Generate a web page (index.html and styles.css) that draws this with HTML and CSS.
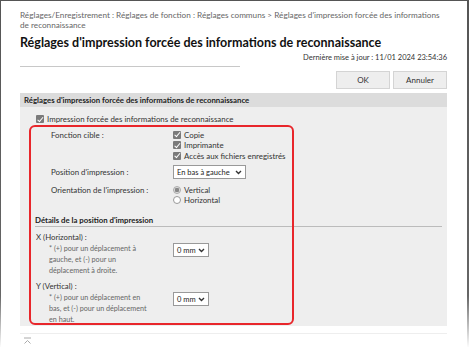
FILE: index.html
```html
<!DOCTYPE html>
<html lang="fr">
<head>
    <meta charset="UTF-8">
    <meta name="viewport" content="width=device-width, initial-scale=1.0">
    <title>Réglages d'impression forcée</title>
    <link rel="stylesheet" href="styles.css">
</head>
<body>
    <div class="window">
        <div class="crumbs">Réglages/Enregistrement : Réglages de fonction : Réglages communs &gt; Réglages d'impression forcée des informations de reconnaissance</div>
        <h1 class="title">Réglages d'impression forcée des informations de reconnaissance</h1>
        <div class="updated">Dernière mise à jour : 11/01 2024 23:54:36</div>
        <div class="title-rule"></div>
        <div class="actions">
            <button class="btn">OK</button>
            <button class="btn">Annuler</button>
        </div>

        <div class="panel">
            <div class="panel-head">Réglages d'impression forcée des informations de reconnaissance</div>
            <div class="panel-body">
                <div class="check-line top-check"><span class="box"></span>Impression forcée des informations de reconnaissance</div>

                <div class="grid">
                    <div class="label">Fonction cible :</div>
                    <div class="values">
                        <div class="check-line"><span class="box"></span>Copie</div>
                        <div class="check-line"><span class="box"></span>Imprimante</div>
                        <div class="check-line"><span class="box"></span>Accès aux fichiers enregistrés</div>
                    </div>

                    <div class="label mid">Position d'impression :</div>
                    <div class="values">
                        <span class="select wide">En bas à gauche<svg width="7" height="5" viewBox="0 0 7 5"><path d="M1 1l2.5 2.5L6 1" fill="none" stroke="#333" stroke-width="1.4"/></svg></span>
                    </div>

                    <div class="label spaced">Orientation de l'impression :</div>
                    <div class="values spaced">
                        <div class="check-line radio-line"><span class="radio on"></span>Vertical</div>
                        <div class="check-line radio-line"><span class="radio"></span>Horizontal</div>
                    </div>
                </div>

                <h2 class="sub-head">Détails de la position d'impression</h2>

                <div class="offset">
                    <div class="offset-text">
                        <div class="axis">X (Horizontal) :</div>
                        <div class="note">* (+) pour un déplacement à<br>gauche, et (-) pour un<br>déplacement à droite.</div>
                    </div>
                    <span class="select">0 mm<svg width="7" height="5" viewBox="0 0 7 5"><path d="M1 1l2.5 2.5L6 1" fill="none" stroke="#333" stroke-width="1.4"/></svg></span>
                </div>

                <div class="offset">
                    <div class="offset-text">
                        <div class="axis">Y (Vertical) :</div>
                        <div class="note">* (+) pour un déplacement en<br>bas, et (-) pour un déplacement<br>en haut.</div>
                    </div>
                    <span class="select">0 mm<svg width="7" height="5" viewBox="0 0 7 5"><path d="M1 1l2.5 2.5L6 1" fill="none" stroke="#333" stroke-width="1.4"/></svg></span>
                </div>

                <!-- highlight frame drawn over the settings -->
                <div class="highlight"></div>
            </div>
        </div>

        <div class="foot">
            <svg width="9" height="8" viewBox="0 0 9 8"><path d="M1 1h7" stroke="#aaa" stroke-width="1"/><path d="M1.5 6.5L4.5 3.5L7.5 6.5" fill="none" stroke="#aaa" stroke-width="1"/></svg>
        </div>
    </div>
</body>
</html>
```

FILE: styles.css
```css
body {
    margin: 0;
    padding: 0;
    background-color: #fff;
    font-family: Lato, "Open Sans", sans-serif;
    color: #333;
}

.window {
    box-sizing: border-box;
    width: 469px;
    height: 347px;
    padding: 9px 20px 0 19px;
    border-style: solid;
    border-width: 1px 2px 0 1px;
    border-image: linear-gradient(to bottom, #555 0%, #666 85%, rgba(255, 255, 255, 0) 100%) 1;
    overflow: hidden;
}

.crumbs {
    font-size: 8.2px;
    line-height: 10px;
    color: #666;
}

.title {
    margin: 5px 0 0;
    font-size: 12.5px;
    line-height: 16px;
    font-weight: bold;
    color: #111;
}

.updated {
    margin-top: 2px;
    text-align: right;
    font-size: 7.5px;
    line-height: 10px;
    color: #333;
}

.title-rule {
    width: 220px;
    height: 1px;
    margin-top: 3px;
    background-color: #c8c8c8;
}

.actions {
    display: flex;
    justify-content: flex-end;
    gap: 3px;
    margin-top: 4px;
}

.btn {
    width: 54px;
    height: 18px;
    padding: 0;
    background-color: #eee;
    border: 1px solid #d4d4d4;
    font-family: inherit;
    font-size: 8px;
    color: #333;
}

.panel {
    margin-top: 4px;
}

.panel-head {
    height: 14px;
    padding-left: 4px;
    background-color: #dcdcdc;
    font-size: 7.8px;
    line-height: 14px;
    font-weight: bold;
    color: #222;
}

.panel-body {
    position: relative;
    height: 219px;
    padding: 7px 5px 0 15px;
    background-color: #eee;
    box-sizing: border-box;
}

.check-line {
    display: flex;
    align-items: center;
    gap: 3px;
    font-size: 7.9px;
    line-height: 10.5px;
    color: #333;
}

.radio-line {
    line-height: 10px;
}

.top-check {
    padding-left: 1px;
}

.box {
    width: 8px;
    height: 8px;
    border-radius: 1px;
    background-color: #7a7a7a;
    position: relative;
}

.box::after {
    content: "";
    position: absolute;
    left: 2.5px;
    top: 0.5px;
    width: 2px;
    height: 4.5px;
    border: solid #fff;
    border-width: 0 1.3px 1.3px 0;
    transform: rotate(40deg);
}

.radio {
    width: 8px;
    height: 8px;
    border-radius: 50%;
    border: 1px solid #999;
    background-color: #fff;
    box-sizing: border-box;
}

.radio.on {
    background: radial-gradient(circle, #888 0, #888 2px, #ddd 2.5px);
    border-color: #aaa;
}

.grid {
    display: grid;
    grid-template-columns: 122px 1fr;
    row-gap: 4px;
    margin-top: 5px;
    padding-left: 16px;
}

.label {
    font-size: 7.9px;
    line-height: 11px;
    color: #333;
}

.label.mid {
    align-self: center;
}

.spaced {
    margin-top: 2px;
}

.values {
    display: flex;
    flex-direction: column;
}

.select {
    display: inline-flex;
    align-items: center;
    justify-content: space-between;
    width: 36px;
    height: 14px;
    padding: 0 3px;
    box-sizing: border-box;
    background-color: #fff;
    border: 1px solid #999;
    font-size: 7.5px;
    color: #222;
}

.select.wide {
    width: 73px;
}

.sub-head {
    margin: 10px 0 0;
    padding-bottom: 0;
    border-bottom: 1px solid #bbb;
    font-size: 7.8px;
    line-height: 11px;
    font-weight: bold;
    color: #222;
}

.offset {
    display: flex;
    align-items: flex-start;
    margin-top: 5px;
    padding-left: 1px;
}

.offset .select {
    margin-top: 11px;
}

.offset-text {
    width: 137px;
}

.axis {
    font-size: 7.8px;
    line-height: 11px;
}

.note {
    padding-left: 13px;
    font-size: 7.2px;
    line-height: 11px;
    color: #666;
}

.highlight {
    position: absolute;
    left: 9px;
    top: 18px;
    width: 265px;
    height: 200px;
    box-sizing: border-box;
    border: 2px solid #e8262b;
    border-radius: 6px;
    pointer-events: none;
}

.foot {
    margin-top: 7px;
    padding: 3px 0 0 3px;
    border-top: 1px solid #eee;
}

.foot svg {
    display: block;
}
```
